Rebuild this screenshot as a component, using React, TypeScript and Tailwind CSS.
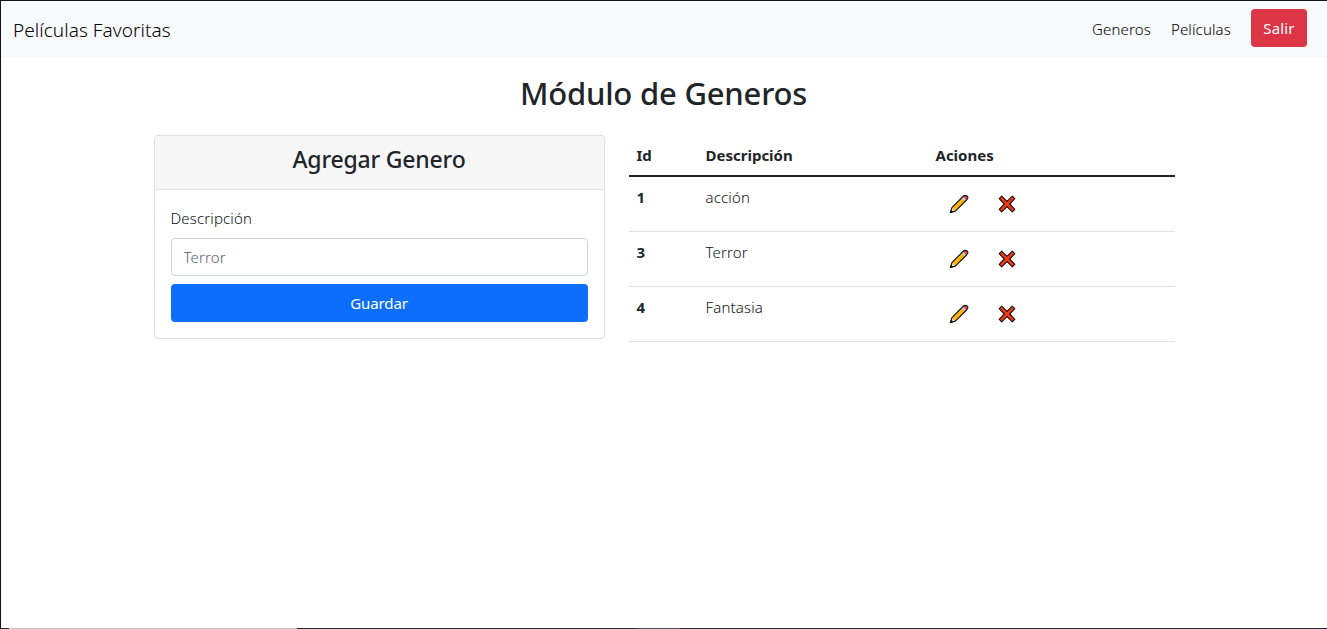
import React from "react";

type Genre = { id: number; description: string };

const genres: Genre[] = [
  { id: 1, description: "acción" },
  { id: 3, description: "Terror" },
  { id: 4, description: "Fantasia" },
];

function PencilIcon() {
  return (
    <svg width="20" height="20" viewBox="0 0 20 20" className="block">
      <path d="M1.5 18.5 2.9 13.6 14 2.5Q16 .6 18 2T17.5 6L6.4 17.1Z" fill="#fcb514" />
      <path d="M1.5 18.5 2.9 13.6 6.4 17.1Z" fill="#e8d5c0" />
      <path d="M12.4 4.1 14.1 2.4 17.6 5.9 15.9 7.6Z" fill="#c9c9cf" />
      <path d="M14 2.6Q16.2.7 17.9 2T17.3 6Z" fill="#e6485d" />
      <path d="M1.5 18.5 2.9 13.6 14 2.5Q16 .6 18 2T17.5 6L6.4 17.1Z" fill="none" stroke="#111" strokeWidth="1.1" strokeLinejoin="round" />
      <path d="M1.3 18.7 2 16.4 3.6 18Z" fill="#111" stroke="#111" />
    </svg>
  );
}

function CrossIcon() {
  return (
    <svg width="18" height="18" viewBox="0 0 18 18" className="block">
      <path
        d="M3.7 1.2 9 6.3 14.3 1.2 16.8 3.7 11.7 9 16.8 14.3 14.3 16.8 9 11.7 3.7 16.8 1.2 14.3 6.3 9 1.2 3.7Z"
        fill="#f03a17"
        stroke="#1a0f0d"
        strokeWidth="1.1"
        strokeLinejoin="round"
      />
    </svg>
  );
}

function Navbar() {
  return (
    <nav className="flex h-14 items-center justify-between bg-[#f8f9fa] pl-3 pr-5">
      <a className="pt-0.5 text-[19px] leading-[30px] tracking-[0.05px] text-black">Películas Favoritas</a>
      <div className="flex items-center gap-5 text-black">
        <a className="whitespace-nowrap">Generos</a>
        <a className="whitespace-nowrap">Películas</a>
        <button className="mb-0.5 h-[38px] w-14 rounded bg-[#dc3545] font-normal text-white">Salir</button>
      </div>
    </nav>
  );
}

function GenreForm() {
  return (
    <section className="h-[204px] w-[451px] rounded border border-[#dfdfdf]">
      <header className="h-[54px] rounded-t-[3px] border-b border-[#dfdfdf] bg-[#f7f7f7] pt-[9px] text-center">
        <h2 className="text-[23px] leading-[29px] font-medium tracking-[-0.2px]">Agregar Genero</h2>
      </header>
      <form className="flex flex-col p-4">
        <label htmlFor="description" className="mb-2 h-6 leading-6 text-[#101214]">Descripción</label>
        <input
          id="description"
          placeholder="Terror"
          className="mb-2 h-[38px] rounded border border-[#ced4da] px-3 placeholder:text-[#59626b]"
        />
        <button type="button" className="h-[38px] rounded bg-[#0d6efd] font-normal tracking-[-0.1px] text-white">Guardar</button>
      </form>
    </section>
  );
}

function GenreTable() {
  return (
    <table className="w-[546px] table-fixed border-collapse self-start text-left">
      <colgroup>
        <col className="w-[69px]" />
        <col className="w-[230px]" />
        <col className="w-[247px]" />
      </colgroup>
      <thead>
        <tr className="h-[41px] border-b-2 border-[#212529] align-top">
          <th className="px-2 pt-2 font-bold tracking-normal">Id</th>
          <th className="px-2 pt-2 font-bold tracking-normal">Descripción</th>
          <th className="px-2 pt-2 font-bold tracking-normal">Aciones</th>
        </tr>
      </thead>
      <tbody>
        {genres.map((genre) => (
          <tr key={genre.id} className="h-[55px] border-b border-[#dee2e6] align-top">
            <th className="px-2 pt-2 font-bold">{genre.id}</th>
            <td className="px-2 pt-2 text-[#101214]">{genre.description}</td>
            <td className="pt-[17px] pl-[21px]">
              <div className="flex items-center gap-[29px]">
                <button aria-label="Editar"><PencilIcon /></button>
                <button aria-label="Eliminar"><CrossIcon /></button>
              </div>
            </td>
          </tr>
        ))}
      </tbody>
    </table>
  );
}

export default function App() {
  return (
    <div className="flex h-[629px] w-[1327px] flex-col overflow-hidden border-t border-l border-[#111318] bg-white font-['Noto_Sans','Open_Sans',sans-serif] text-[15px] leading-6 font-[360] tracking-[0.15px] text-[#212529]">
      <Navbar />
      <main className="flex grow flex-col items-center pr-px">
        <h1 className="mt-[17px] mb-[22px] text-[31px] leading-[39px] font-medium tracking-[-0.2px]">Módulo de Generos</h1>
        <div className="flex gap-6 pl-px">
          <GenreForm />
          <GenreTable />
        </div>
      </main>
      <footer className="flex h-px shrink-0 bg-[#202e35]">
        <div className="ml-2 w-72 bg-[#c4c4c4]" />
        <div className="ml-[339px] w-11 bg-[#46535d]" />
      </footer>
    </div>
  );
}
